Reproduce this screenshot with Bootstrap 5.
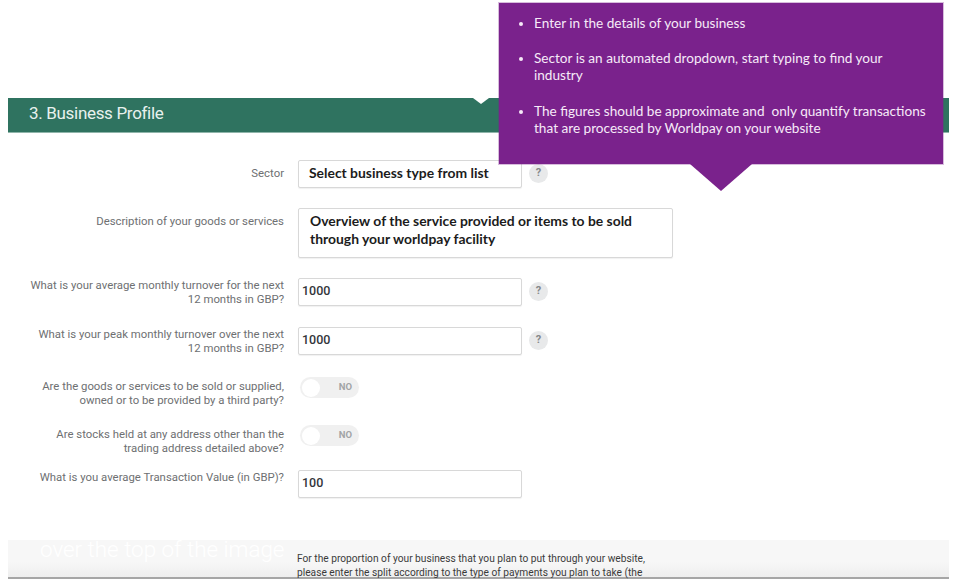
<!DOCTYPE html>
<html lang="en">
<head>
<meta charset="utf-8">
<title>Business Profile</title>
<link href="https://cdn.jsdelivr.net/npm/bootstrap@5.3.0/dist/css/bootstrap.min.css" rel="stylesheet">
<style>
html, body { background: #fff; }
body { font-family: Roboto, "Liberation Sans", sans-serif; height: 583px; overflow: hidden; position: relative; }
.sheet { padding: 98px 4px 0 8px; }
.banner { height: 35px; background: #2f7360; border-bottom: 1px solid #8fb5aa; color: #e8f1ee; font-family: Roboto, sans-serif; font-size: 17px; letter-spacing: -.32px; padding-left: 21px; line-height: 31px; position: relative; }
.banner::after { content: ""; position: absolute; left: 465px; top: 0; border: 8px solid transparent; border-top: 6px solid #fff; border-bottom: 0; }
.fld { display: flex; gap: 14px; align-items: flex-start; }
.fld-sector { margin-top: 27px; }
.fld-desc { margin-top: 20px; }
.fld-avg { margin-top: 20px; }
.fld-peak { margin-top: 21px; }
.fld-third { margin-top: 22px; }
.fld-stock { margin-top: 18px; }
.fld-value { margin-top: 15px; }
.lbl { width: 276px; flex: none; text-align: right; font-size: 11.36px; line-height: 14px; color: #6e7072; }
.lbl-one { padding-top: 6px; }
.lbl-drop { padding-top: 2px; }
.entry.form-control { width: 224px; height: 28px; padding: 0 0 0 3px; border: 1px solid #d8d8d8; border-radius: 2px; font-size: 12.5px; font-weight: 500; line-height: 24px; color: #33363a; box-shadow: 0 1px 1px rgba(0,0,0,.06); font-family: Roboto, sans-serif; flex: none; }
.entry-strong.form-control { padding-left: 10px; font-family: Lato, "Liberation Sans", sans-serif; font-weight: 700; font-size: 13.9px; color: #1c1c1c; }
.entry-wide.form-control { width: 375px; height: 50px; padding: 3px 11px 0; line-height: 18px; }
.hint { width: 19px; height: 19px; border-radius: 50%; background: #e8e9ea; color: #85888a; font-size: 11px; font-weight: 700; display: flex; align-items: center; justify-content: center; margin: 4px 0 0 -7px; flex: none; }
.flip { width: 59px; height: 21px; margin-left: 2px; border-radius: 11px; background: #f0f0f0; display: flex; align-items: center; justify-content: space-between; padding: 0 7px 0 2px; color: #a2a4a6; font-size: 9.5px; font-weight: 700; flex: none; }
.flip-knob { width: 18px; height: 18px; border-radius: 50%; background: #fff; }
.band { position: absolute; left: 8px; right: 4px; top: 540px; height: 39px; background: linear-gradient(#f7f7f7 60%, #eeeeee); border-bottom: 2px solid #a6a6a6; }
.band-ghost { position: absolute; left: 32px; top: 0; line-height: 18px; color: #fff; font-size: 22.4px; font-weight: 300; white-space: nowrap; }
.band-copy { position: absolute; left: 289px; top: 12px; font-size: 10.2px; line-height: 14px; color: #3b3b3b; white-space: nowrap; }
.callout { position: absolute; left: 499px; top: 3px; width: 444px; height: 161px; background: #7a228c; color: #f6eaf8; font-family: Lato, "Liberation Sans", sans-serif; font-size: 13.6px; line-height: 17px; padding: 12px 10px 0 35px; box-shadow: 0 0 0 1px rgba(122,34,140,.3); }
.callout::after { content: ""; position: absolute; left: 191px; top: 161px; border-left: 31px solid transparent; border-right: 31px solid transparent; border-top: 27px solid #7a228c; }
.callout ul { margin: 0; padding: 0; }
.callout li { margin-bottom: 18.4px; }
</style>
</head>
<body>
<main class="sheet">
  <h1 class="banner fw-normal mb-0">3. Business Profile</h1>
  <form>
    <div class="fld fld-sector">
      <div class="lbl lbl-one">Sector</div>
      <div class="entry entry-strong form-control">Select business type from list</div>
      <div class="hint">?</div>
    </div>
    <div class="fld fld-desc">
      <div class="lbl lbl-one">Description of your goods or services</div>
      <div class="entry entry-strong entry-wide form-control">Overview of the service provided or items to be sold through your worldpay facility</div>
    </div>
    <div class="fld fld-avg">
      <div class="lbl">What is your average monthly turnover for the next<br>12 months in GBP?</div>
      <div class="entry form-control">1000</div>
      <div class="hint">?</div>
    </div>
    <div class="fld fld-peak">
      <div class="lbl">What is your peak monthly turnover over the next<br>12 months in GBP?</div>
      <div class="entry form-control">1000</div>
      <div class="hint">?</div>
    </div>
    <div class="fld fld-third">
      <div class="lbl lbl-drop">Are the goods or services to be sold or supplied,<br>owned or to be provided by a third party?</div>
      <div class="flip"><span class="flip-knob"></span><span>NO</span></div>
    </div>
    <div class="fld fld-stock">
      <div class="lbl lbl-drop">Are stocks held at any address other than the<br>trading address detailed above?</div>
      <div class="flip"><span class="flip-knob"></span><span>NO</span></div>
    </div>
    <div class="fld fld-value">
      <div class="lbl">What is you average Transaction Value (in GBP)?</div>
      <div class="entry form-control">100</div>
    </div>
  </form>
</main>
<section class="band">
  <div class="band-ghost">over the top of the image</div>
  <div class="band-copy">For the proportion of your business that you plan to put through your website,<br>please enter the split according to the type of payments you plan to take (the</div>
</section>
<aside class="callout">
  <ul>
    <li>Enter in the details of your business</li>
    <li>Sector is an automated dropdown, start typing to find your industry</li>
    <li>The figures should be approximate and &nbsp;only quantify transactions that are processed by Worldpay on your website</li>
  </ul>
</aside>
<script src="https://cdn.jsdelivr.net/npm/bootstrap@5.3.0/dist/js/bootstrap.bundle.min.js"></script>
</body>
</html>
